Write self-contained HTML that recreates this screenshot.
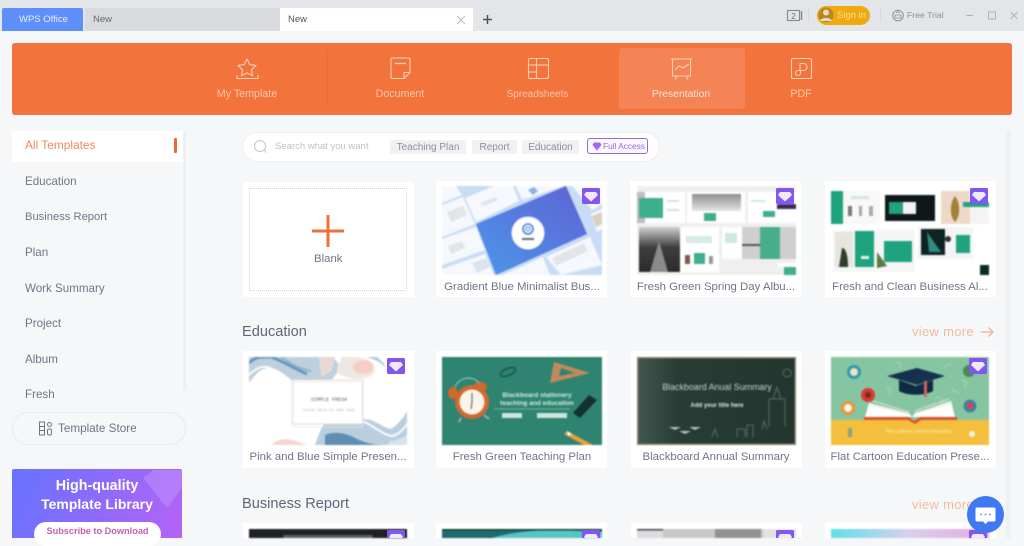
<!DOCTYPE html>
<html lang="en"><head><meta charset="utf-8"><title>WPS Office</title>
<style>
*{box-sizing:border-box;margin:0;padding:0}
html,body{width:1024px;height:538px;overflow:hidden;background:#f6f7f8;font-family:"Liberation Sans","Noto Sans CJK SC",sans-serif}
.a{position:absolute}
.t{position:absolute;white-space:nowrap;line-height:1}
.nav{color:#fbc7aa;font-size:10.7px;transform:translateX(-50%)}
.side{left:25px;font-size:11.6px;color:#6f7587}
.card{position:absolute;background:#fff;width:171px}
.cap{position:absolute;white-space:nowrap;font-size:11.4px;color:#6f7587;line-height:1;transform:translateX(-50%)}
.tag{position:absolute;top:140px;height:14px;background:#f0f1f2;color:#8b8f99;font-size:10px;line-height:15px;text-align:center;border-radius:1px}
.h{font-size:14.6px;color:#5f6678;left:242px}
.more{font-size:13px;color:#f0bba0;left:912px;letter-spacing:.3px}
svg{position:absolute;overflow:hidden}
.th{filter:blur(.7px)}
</style></head><body>

<!-- title bar -->
<div class="a" style="left:0;top:0;width:1024px;height:31px;background:#e3e5e8"></div>
<div class="a" style="left:2px;top:8px;width:81px;height:23px;background:#5f8ffb;border-radius:2px 2px 0 0"></div>
<div class="t" style="left:19px;top:15px;font-size:9.5px;color:#e6edff">WPS Office</div>
<div class="a" style="left:85px;top:8px;width:195px;height:23px;background:#d8dadd"></div>
<div class="t" style="left:93px;top:15px;font-size:9.5px;color:#666b73">New</div>
<div class="a" style="left:280px;top:8px;width:193px;height:23px;background:#fff"></div>
<div class="t" style="left:288px;top:15px;font-size:9.5px;color:#4d5158">New</div>
<svg style="left:0;top:0" width="1024" height="31" fill="none">
<path d="M457 16l8 8M465 16l-8 8" stroke="#b9bcc2" stroke-width="1"/>
<path d="M483 19.500h9M487.500 15v9" stroke="#4c5058" stroke-width="1.500"/>
<rect x="787.500" y="10.500" width="12" height="10" stroke="#858a92" stroke-width="1.100"/><path d="M801.500 11v9" stroke="#858a92" stroke-width="1.500"/>
<text x="793.500" y="19" font-size="8.500" fill="#70757d" text-anchor="middle" font-family="Liberation Sans">2</text>
<path d="M808.500 9v13M880.500 9v13" stroke="#d6d8db"/>
<rect x="817" y="6" width="53" height="19" rx="9.500" fill="#eeaa10"/>
<circle cx="826" cy="15" r="7.500" fill="#b58625"/><circle cx="826" cy="12.500" r="3" fill="#f3d9ae"/><path d="M820 21c1-4 11-4 12 0z" fill="#ecdcc0"/>
<circle cx="898" cy="15.500" r="5.300" stroke="#8f949c"/><path d="M895 15h6v3h-6zM896 13l2-1.500 2 1.500" stroke="#8f949c" stroke-width=".8"/>
<path d="M966 15.500h7" stroke="#b0b4ba" stroke-width="1.200"/>
<rect x="988.500" y="12" width="7" height="7" stroke="#b0b4ba"/>
<path d="M1010.500 12l7 7M1017.500 12l-7 7" stroke="#b0b4ba"/>
</svg>
<div class="t" style="left:837px;top:11px;font-size:9.5px;color:#fbdf96">Sign in</div>
<div class="t" style="left:907px;top:11px;font-size:8.700px;color:#8b9098">Free Trial</div>

<!-- banner -->
<div class="a" style="left:12px;top:43px;width:1000px;height:72px;background:#f3733d;border-radius:3px"></div>
<div class="a" style="left:619px;top:48px;width:126px;height:61px;background:#f48355;border-radius:3px"></div>
<div class="a" style="left:327px;top:50px;width:1px;height:55px;background:#ee6c36"></div>
<svg style="left:0;top:43px" width="1024" height="50" fill="none" stroke="#fcd0b5" stroke-width="1.100" stroke-linejoin="round">
<path d="M247 16l2.800 5.600 6.200.9-4.500 4.300 1 6-5.500-2.900-5.500 2.900 1-6-4.500-4.300 6.200-.9z"/>
<path d="M237 32v3.500h21V32"/>
<path d="M391 16.500a1.500 1.500 0 0 1 1.500-1.500h16a1.500 1.500 0 0 1 1.500 1.500v13l-6 6h-11.500a1.500 1.500 0 0 1-1.500-1.500z"/>
<path d="M395 20.500h11" stroke-width="1.300"/><path d="M410 29.500h-6v6"/>
<rect x="528.500" y="15.500" width="20" height="20" rx="1.500"/><path d="M528.500 22h20M528.500 29h8M536.500 15.500v20"/>
<path d="M671 16h21M672.500 16v17h18V16M677 33l-2 3.500M686 33l2 3.500"/><path d="M675 27l4-4 4 2 6-4"/>
<rect x="791.500" y="15.500" width="20" height="20" rx="1.500"/>
<path d="M800 28V20.500h3.500a3.500 3.500 0 0 1 0 7H798a2.500 2.500 0 1 0 2.500 2.500V27.500"/>
</svg>
<div class="t nav" style="left:247px;top:89px">My Template</div>
<div class="t nav" style="left:400px;top:89px">Document</div>
<div class="t nav" style="left:537.500px;top:90px;font-size:10px">Spreadsheets</div>
<div class="t nav" style="left:681px;top:89.500px;color:#fde3d3;font-size:10.400px">Presentation</div>
<div class="t nav" style="left:801px;top:89px">PDF</div>

<!-- sidebar -->
<div class="a" style="left:183px;top:131px;width:3px;height:259px;background:#eeeff1"></div>
<div class="a" style="left:12px;top:131px;width:171px;height:31px;background:#fff"></div>
<div class="a" style="left:174px;top:138px;width:3px;height:15px;background:#ea6a37;border-radius:1px"></div>
<div class="t side" style="top:140px;color:#ef8a5e;font-size:11.900px">All Templates</div>
<div class="t side" style="top:176px">Education</div>
<div class="t side" style="top:212px;font-size:11.200px">Business Report</div>
<div class="t side" style="top:247px">Plan</div>
<div class="t side" style="top:283px">Work Summary</div>
<div class="t side" style="top:318px">Project</div>
<div class="t side" style="top:354px">Album</div>
<div class="t side" style="top:389px">Fresh</div>
<div class="a" style="left:12px;top:412px;width:174px;height:33px;border:1px solid #e9eaec;border-radius:17px;background:#f6f7f8"></div>
<svg style="left:38px;top:421px" width="15" height="15" fill="none" stroke="#6f7587"><rect x="1.500" y="1" width="5" height="13"/><path d="M1.500 5.500h5M1.500 9.500h5"/><circle cx="11.500" cy="3.500" r="2"/><rect x="9.500" y="8" width="4" height="6" rx="1.500"/></svg>
<div class="t" style="left:58px;top:423px;font-size:11.700px;color:#6f7587">Template Store</div>
<div class="a" style="left:12px;top:469px;width:170px;height:69px;background:linear-gradient(115deg,#6672ff,#b563f6);border-radius:2px 2px 0 0;overflow:hidden">
<svg style="left:0;top:0" width="170" height="69"><path d="M131 9L141 1h29v18l-15 20z" fill="#c49cff" opacity=".45"/></svg>
</div>
<div class="t" style="left:12px;width:170px;text-align:center;top:479px;font-size:14.300px;font-weight:bold;color:#fff">High-quality</div>
<div class="t" style="left:12px;width:170px;text-align:center;top:497px;font-size:14px;font-weight:bold;color:#fff">Template Library</div>
<div class="a" style="left:34px;top:522px;width:127px;height:24px;background:#fff;border-radius:12px"></div>
<div class="t" style="left:34px;width:127px;text-align:center;top:527px;font-size:9.200px;font-weight:bold;color:#c85cb6">Subscribe to Download</div>

<!-- scrollbar -->
<div class="a" style="left:1006px;top:130px;width:5px;height:408px;background:#eff0f2"></div>

<!-- search -->
<div class="a" style="left:242px;top:132px;width:418px;height:30px;background:#fff;border:1px solid #eeeff1;border-radius:15px"></div>
<svg style="left:253px;top:139px" width="15" height="15" fill="none" stroke="#c4c7cf"><circle cx="7" cy="7" r="5.500"/><path d="M11 11l2.500 2.500"/></svg>
<div class="t" style="left:275px;top:142px;font-size:9.500px;color:#bdc1cc">Search what you want</div>
<div class="tag" style="left:390px;width:76px">Teaching Plan</div>
<div class="tag" style="left:472px;width:45px">Report</div>
<div class="tag" style="left:522px;width:57px">Education</div>
<div class="a" style="left:587px;top:138px;width:61px;height:16px;border:1px solid #8f6bdc;border-radius:3px;background:#fbf9ff"></div>
<svg style="left:592px;top:142px" width="10" height="9"><path d="M2 .5h6l1.500 2.500L5 8.500.5 3z" fill="#a26ae8"/></svg>
<div class="t" style="left:603px;top:142px;font-size:8.300px;color:#8f6bdc">Full Access</div>

<!-- cards -->
<div class="card" style="left:243px;top:182px;height:115px"></div>
<div class="card" style="left:436px;top:181px;height:116px"></div>
<div class="card" style="left:630px;top:181px;height:116px"></div>
<div class="card" style="left:825px;top:181px;height:116px"></div>
<div class="a" style="left:249px;top:188px;width:158px;height:103px;border:1px dotted #cfd0d4"></div>
<svg style="left:310px;top:214px" width="36" height="34"><path d="M2 17h32M18 1v32" stroke="#ee7238" stroke-width="3"/></svg>
<div class="t" style="left:314px;top:254px;font-size:11.400px;color:#6f7587">Blank</div>
<div class="cap" style="left:522px;top:282px">Gradient Blue Minimalist Bus...</div>
<div class="cap" style="left:716px;top:282px">Fresh Green Spring Day Albu...</div>
<div class="cap" style="left:910px;top:282px">Fresh and Clean Business Al...</div>

<div class="t h" style="top:325px">Education</div>
<div class="t more" style="top:325px">view more</div>
<svg style="left:980px;top:326px" width="15" height="12" fill="none" stroke="#eeb093" stroke-width="1.300"><path d="M1 6h12M8.500 1.500L13 6l-4.500 4.500"/></svg>

<div class="card" style="left:243px;top:351px;height:117px"></div>
<div class="card" style="left:436px;top:351px;height:117px"></div>
<div class="card" style="left:631px;top:351px;height:117px"></div>
<div class="card" style="left:825px;top:351px;height:117px"></div>
<div class="cap" style="left:328px;top:452px">Pink and Blue Simple Presen...</div>
<div class="cap" style="left:522px;top:452px">Fresh Green Teaching Plan</div>
<div class="cap" style="left:716px;top:452px">Blackboard Annual Summary</div>
<div class="cap" style="left:910px;top:452px">Flat Cartoon Education Prese...</div>

<div class="t h" style="top:497px">Business Report</div>
<div class="t more" style="top:498px">view more</div>

<div class="card" style="left:243px;top:523px;height:15px"></div>
<div class="card" style="left:436px;top:523px;height:15px"></div>
<div class="card" style="left:631px;top:523px;height:15px"></div>
<div class="card" style="left:825px;top:523px;height:15px"></div>

<!-- thumbnails -->
<svg class="th" style="left:442px;top:186px" width="160" height="89" viewBox="0 0 160 89">
<rect width="160" height="89" fill="#c9dcf5"/>
<g fill="#f5f8fd">
<path d="M0 0h14l6 9L0 17z"/>
<path d="M0 19l21-8 12 27L0 51z"/>
<path d="M23 12L52 0h19l6 15-43 21z"/>
<path d="M74 0h48L80 14z"/>
<path d="M0 53l34-12 9 23L0 79z"/>
<path d="M0 83l43-15 9 21H0z"/>
<path d="M60 89l41-18 7 18z"/>
<path d="M104 71l44-20 12 28-41 10z"/>
<path d="M130 0h30v18l-10 6z"/>
<path d="M149 28l11-5v20l-5 3z"/>
</g>
<g fill="#e2e4e8"><path d="M5 26l16-6 4 9-16 7zM6 60l14-5 3 7-14 6zM110 72l32-15 4 8-32 15zM38 17l16-6 2 3-15 6z"/><path d="M86 4l6-3 4 4-5 4z" fill="#8fb0e4"/><path d="M30 77l14-5 4 9-13 6z" fill="#d9e3f2"/><path d="M150 30l10-4v12l-6 3z" fill="#d8cfc0"/></g>
<defs><linearGradient id="g1" x1="0" y1="1" x2="1" y2="0"><stop offset="0" stop-color="#4b97e8"/><stop offset="1" stop-color="#5f62d6"/></linearGradient></defs>
<path d="M34 38L124 0l21 48-91 41z" fill="url(#g1)"/>
<circle cx="86" cy="47" r="16.500" fill="#fff"/><circle cx="86" cy="43" r="5" fill="none" stroke="#3f7fd6" stroke-width="1.600"/><circle cx="86" cy="43" r="2" fill="none" stroke="#3f7fd6"/>
<rect x="80" y="52" width="12" height="2" fill="#667"/>
</svg>

<svg class="th" style="left:637px;top:186px" width="159" height="89" viewBox="0 0 159 89">
<rect width="159" height="89" fill="#efefef"/>
<defs><linearGradient id="g2" x1="0" y1="0" x2="0" y2="1"><stop offset="0" stop-color="#8f8f8f"/><stop offset="1" stop-color="#e4e4e4"/></linearGradient><linearGradient id="g3" x1="0" y1="0" x2="0" y2="1"><stop offset="0" stop-color="#cfcfcf"/><stop offset=".45" stop-color="#3e3e3e"/><stop offset="1" stop-color="#2a2a2a"/></linearGradient></defs>
<rect y="6" width="8" height="31" fill="#bdbdbd"/>
<rect x="8" y="6" width="40" height="31" fill="#fff"/>
<rect x="2" y="12" width="24" height="20" fill="#3fae8c"/>
<rect x="30" y="14" width="12" height="2" fill="#ddd"/><rect x="30" y="23" width="12" height="2" fill="#ddd"/>
<rect x="50" y="6" width="58" height="31" fill="#fff"/><rect x="55" y="8" width="49" height="17" fill="url(#g2)"/>
<rect x="67" y="27" width="12" height="8" fill="#3fae8c"/>
<rect x="111" y="6" width="48" height="31" fill="#fff"/><rect x="126" y="25" width="12" height="6" fill="#3fae8c"/><rect x="114" y="14" width="14" height="2" fill="#cfe7df"/><rect x="140" y="18" width="19" height="5" fill="#3a2a5c"/>
<rect x="2" y="41" width="41" height="45" fill="url(#g3)"/>
<path d="M22 55l-9 31h18z" fill="#8a8a8a"/>
<rect x="43" y="41" width="39" height="45" fill="#fff"/><rect x="57" y="67" width="11" height="11" fill="#3fae8c"/><rect x="48" y="69" width="5" height="9" fill="#7a5a50"/><rect x="72" y="70" width="4" height="8" fill="#999"/>
<rect x="49" y="50" width="26" height="7" fill="#d5ebe4"/>
<rect x="85" y="41" width="20" height="32" fill="#fff"/><rect x="88" y="47" width="12" height="10" fill="#cfe7df"/>
<rect x="105" y="41" width="54" height="32" fill="#cfcfcf"/><rect x="105" y="58" width="18" height="2" fill="#555"/>
<rect x="123" y="41" width="20" height="32" fill="#47ad8c"/>
<rect x="147" y="81" width="12" height="8" fill="#3fae8c"/><rect x="141" y="77" width="18" height="4" fill="#fff"/>
</svg>

<svg class="th" style="left:831px;top:186px" width="158" height="89" viewBox="0 0 158 89">
<rect width="158" height="89" fill="#fff"/>
<rect y="5" width="12" height="33" fill="#1fa37f"/>
<rect x="12" y="5" width="37" height="33" fill="#f8f8f8"/>
<rect x="20" y="10" width="18" height="3" fill="#cfe7df"/>
<rect x="17" y="20" width="4" height="10" fill="#777"/><rect x="28" y="20" width="3" height="10" fill="#aaa"/><rect x="38" y="20" width="4" height="10" fill="#aaa"/>
<rect x="54" y="9" width="50" height="26" fill="#10171a"/><rect x="58" y="16" width="14" height="12" fill="#1fa37f"/><rect x="72" y="16" width="13" height="12" fill="#f2f2f2"/>
<rect x="110" y="5" width="29" height="33" fill="#eed9c8"/><path d="M124 10c5 6 6 20 0 26-6-6-5-20 0-26z" fill="#a5803a"/>
<rect x="139" y="21" width="19" height="17" fill="#f4f4f4"/><rect x="132" y="16" width="26" height="5" fill="#1fa37f"/>
<rect x="2" y="44" width="82" height="42" fill="#f6f6f6"/>
<rect x="4" y="46" width="18" height="35" fill="#e8e4df"/><path d="M11 62c4 0 6 8 6 19H8z" fill="#2f3d2c"/>
<rect x="24" y="45" width="19" height="36" fill="#1fa37f"/><rect x="30" y="70" width="8" height="3" fill="#e6f3ef"/>
<path d="M46 66l10 14-10 2z" fill="#5b7a3f"/>
<rect x="53" y="55" width="28" height="21" fill="#1fa37f"/>
<rect x="87" y="41" width="55" height="32" fill="#f4f4f4"/>
<rect x="90" y="43" width="24" height="26" fill="#0e2422"/><path d="M96 46l14 20-12 0z" fill="#2f8a80"/>
<circle cx="117" cy="53" r="3" fill="#333"/><rect x="125" y="49" width="14" height="18" fill="#1fa37f"/>
<rect x="149" y="79" width="9" height="10" fill="#0c2a1e"/>
</svg>

<svg class="th" style="left:249px;top:357px" width="158" height="88" viewBox="0 0 158 88">
<rect width="158" height="88" fill="#fff"/>
<path d="M0 0H84L92 10 82 24H44C38 20 30 12 22 11 12 10 6 18 0 26z" fill="#bcd0df"/>
<path d="M0 6C4 2 8 0 14 0h8c12 4 20 10 36 17" stroke="#6d97b8" stroke-width="3" fill="none"/>
<path d="M32 0c8 6 18 12 30 14" stroke="#8db0c9" stroke-width="2" fill="none"/>
<path d="M0 18c6-6 12-9 18-8 8 2 14 8 22 14" stroke="#fff" stroke-width="1.800" fill="none"/>
<path d="M70 0h16c-2 6 0 10-6 16l-8 4z" fill="#e9d8d4"/>
<path d="M92 0h16c6 0 18 4 18 12 0 8-14 12-24 9-8-2-14-4-14-8 0-5 4-8 4-13z" fill="#eee8e4"/>
<ellipse cx="114" cy="10" rx="10" ry="7" fill="#f4cfc4"/>
<path d="M118 0h10c4 3 8 7 8 10 0 0-4-4-8-6z" fill="#b8ccdb"/>
<path d="M158 54c-4 8-10 14-16 18-10-2-16-10-28-10H80C74 66 70 76 66 88h92z" fill="#b9cfdf"/>
<path d="M112 64c10 2 18 12 30 15 6 0 12-6 16-12" stroke="#fff" stroke-width="1.800" fill="none"/>
<path d="M76 78c10-4 22-2 32 4 10 5 20 6 30 6H76z" fill="#5f8eb0"/>
<path d="M140 84c6 0 12-2 18-6v10h-18z" fill="#d8e4ed"/>
<path d="M22 88c6-6 14-7 20-5 6 1 10 3 16 5z" fill="#f2d8d0"/>
<rect x="43" y="23" width="71" height="44" fill="#fff" stroke="#e6dcd4"/>
<rect x="45" y="25" width="68" height="45" fill="none" stroke="#efe7e0" stroke-width=".7"/>
<text x="80" y="44" font-size="5" fill="#665" text-anchor="middle" font-family="Liberation Mono">SIMPLE FRESH</text>
<text x="80" y="54" font-size="4" fill="#aaa" text-anchor="middle" font-family="Liberation Mono">Click here to add text</text>
</svg>

<svg class="th" style="left:442px;top:357px" width="160" height="88" viewBox="0 0 160 88">
<rect width="160" height="88" fill="#2e8470"/>
<path d="M108 26l4-21 36 11z" fill="#c28a5c"/><path d="M117 19l2-8 14 5z" fill="#2e8470"/>
<ellipse cx="66" cy="15" rx="8" ry="3.500" fill="none" stroke="#1d4f45" stroke-width="1.500" transform="rotate(-22 66 15)"/>
<ellipse cx="11" cy="36" rx="5" ry="6" fill="#d4682a"/><ellipse cx="38" cy="30" rx="7" ry="5" fill="#d4682a"/>
<path d="M13 30c4-10 18-12 24-4" fill="none" stroke="#bdd" stroke-width=".8"/>
<circle cx="30" cy="45" r="17" fill="#cf6a30"/><circle cx="30" cy="45" r="12.500" fill="#fbf4ea"/>
<path d="M30 36v9l-1 7" stroke="#555" fill="none"/>
<path d="M19 61l-2 4M42 58l5 4" stroke="#bbb" stroke-width="1.500"/>
<path d="M131 56l16-18 8 5-17 18z" fill="#16302c"/>
<path d="M125 74l26 14h-9l-20-11z" fill="#eea03a"/>
<path d="M125 74l5 3-4 2z" fill="#fff"/>
<text x="95" y="40" font-size="6.600" font-weight="bold" fill="#d6ebe4" text-anchor="middle">Blackboard stationery</text>
<text x="95" y="48" font-size="6.600" font-weight="bold" fill="#d6ebe4" text-anchor="middle">teaching and education</text>
<path d="M52 52h76" stroke="#bfdcd3" stroke-width=".5"/>
<rect x="60" y="56" width="20" height="5" fill="#cfe6de"/><rect x="95" y="56" width="30" height="5" fill="#cfe6de"/>
</svg>

<svg class="th" style="left:637px;top:357px" width="159" height="88" viewBox="0 0 159 88">
<rect width="159" height="88" fill="#8a8068"/>
<defs><linearGradient id="g5"><stop offset="0" stop-color="#40564e"/><stop offset=".25" stop-color="#263c35"/><stop offset="1" stop-color="#22362f"/></linearGradient></defs>
<rect x="1.500" y="1.500" width="156" height="85" fill="url(#g5)"/>
<text x="80" y="33" font-size="8.900" fill="#c9d4cd" text-anchor="middle">Blackboard Anual Summary</text>
<text x="80" y="50" font-size="6" font-weight="bold" fill="#dfe6e0" text-anchor="middle">Add your title here</text>
<path d="M32 70h12l-6 3zM52 70h12l-6 3zM42 74h12l-6 3z" fill="#b8c4bc"/>
<g fill="none" stroke="#5f7d6c" stroke-width=".8"><circle cx="150" cy="16" r="4"/><path d="M132 70V42h16v28M136 42l4-12 4 12M125 72l2-8 3 8M100 80v-8h8v8M110 80v-12h6v12M75 80l3-8 3 8"/></g>
</svg>

<svg class="th" style="left:831px;top:357px" width="158" height="88" viewBox="0 0 158 88">
<rect width="158" height="88" fill="#86c5a2"/>
<g stroke="#a6d8ba" fill="none" stroke-width="1"><path d="M64 6c4-3 8 3 4 6M112 10l8-3M130 24c4-3 7 2 3 6M55 30c5-1 6 4 2 6M104 42c4-4 10 0 6 5M120 32l8 4M140 46c3-3 5 1 3 3"/></g>
<path d="M56 19l30-8 28 8-28 9z" fill="#16314e"/>
<path d="M68 23v11c8 5 26 5 34 0V23l-17 6z" fill="#102a44"/>
<rect x="93" y="24" width="3" height="16" fill="#d6615a"/>
<circle cx="23" cy="15" r="7" fill="#2d9ab0"/><circle cx="23" cy="15" r="4" fill="#f2e0bc"/>
<circle cx="37" cy="38" r="7" fill="#d83a34"/><circle cx="37" cy="38" r="3" fill="#7a2a20"/>
<circle cx="17" cy="51" r="7" fill="#e9963a"/><circle cx="17" cy="51" r="4" fill="#f6f0e0"/>
<circle cx="138" cy="14" r="6" fill="#4a8a4c"/>
<circle cx="139" cy="49" r="6.500" fill="#3a84a8"/><circle cx="139" cy="49" r="3.500" fill="#c64b52"/>
<rect y="63" width="158" height="25" fill="#f4bf3c"/>
<path d="M34 60l4-14 40 10 3 4 3-4 36-12 4 16z" fill="#fff"/>
<path d="M40 48l38 9M42 44l36 11M120 46l-36 10M118 42l-34 12" stroke="#e6e2d6" stroke-width="1"/>
<path d="M33 60h45l5 4 6-4h37v3H90l-6 4-7-4H33z" fill="#d8522e"/>
<text x="88" y="76" font-size="5" fill="#fbeec0" text-anchor="middle">Flat cartoon colorful education</text>
<circle cx="141" cy="77" r="3" fill="#f4f2e8"/><rect x="17" y="71" width="4" height="9" fill="#8aa08a"/>
</svg>

<svg class="th" style="left:249px;top:529px" width="158" height="9"><rect width="158" height="9" fill="#1f2126"/><rect x="34" y="6" width="90" height="3" rx="2" fill="#5c5e64"/></svg>
<svg class="th" style="left:442px;top:529px" width="160" height="9"><rect width="160" height="9" fill="#1d6a70"/><path d="M50 9C80 0 110 0 160 3v6z" fill="#57c4c8"/><rect width="160" height="1.500" fill="#143"/></svg>
<svg class="th" style="left:637px;top:529px" width="159" height="9"><rect width="159" height="9" fill="#c8c8c8"/><rect width="26" height="9" fill="#dcdcdc"/><rect width="26" height="1.500" fill="#445"/><rect x="78" width="46" height="9" fill="#929292"/><rect x="126" width="33" height="9" fill="#e2e2e2"/></svg>
<svg class="th" style="left:831px;top:529px" width="158" height="9"><defs><linearGradient id="g4"><stop offset="0" stop-color="#5fe0e8"/><stop offset=".5" stop-color="#d8d0ee"/><stop offset="1" stop-color="#e8a8e0"/></linearGradient></defs><rect width="158" height="9" fill="url(#g4)"/></svg>

<!-- gem badges -->
<svg style="left:0;top:0" width="1024" height="538">
<defs><g id="gem"><rect width="18" height="16" rx="1.500" fill="#8257ee"/><path d="M4 4h10l2 3-7 6.500L2 7z" fill="#f0e8ff"/></g></defs>
<use href="#gem" x="582" y="188"/><use href="#gem" x="776" y="188"/><use href="#gem" x="970" y="188"/>
<use href="#gem" x="387" y="358"/><use href="#gem" x="969" y="358"/>
<use href="#gem" x="387" y="530"/><use href="#gem" x="582" y="530"/><use href="#gem" x="776" y="530"/><use href="#gem" x="969" y="530"/>
</svg>

<!-- chat -->
<svg style="left:967px;top:496px" width="37" height="37">
<circle cx="18.500" cy="18.500" r="18.500" fill="#3f79f1"/>
<path d="M10 11.500h17a1.500 1.500 0 0 1 1.500 1.500v11a1.500 1.500 0 0 1-1.500 1.500h-6l-2.500 2.500-2.500-2.500h-6A1.500 1.500 0 0 1 8.500 24V13A1.500 1.500 0 0 1 10 11.500z" fill="#fff"/>
<circle cx="14" cy="18.500" r="1" fill="#7aa0f0"/><circle cx="18.500" cy="18.500" r="1" fill="#7aa0f0"/><circle cx="23" cy="18.500" r="1" fill="#7aa0f0"/>
</svg>
</body></html>
